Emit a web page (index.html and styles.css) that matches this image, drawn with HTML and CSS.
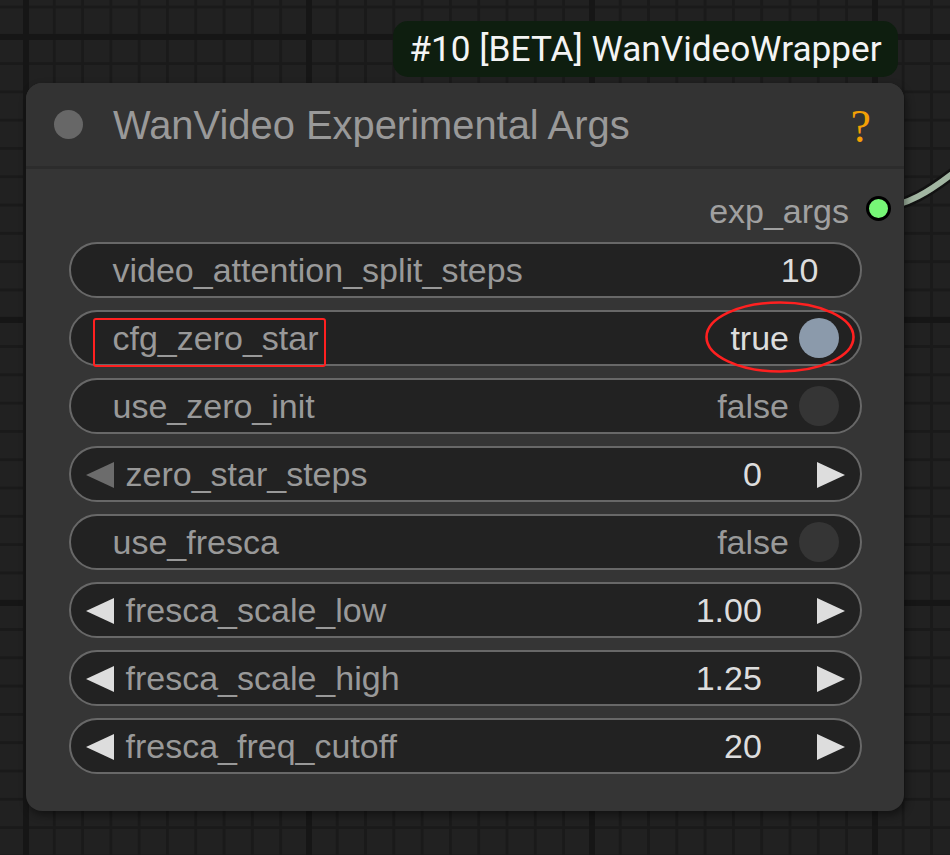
FILE: index.html
```html
<!DOCTYPE html>
<html>
<head>
<meta charset="utf-8">
<link rel="stylesheet" href="styles.css">
</head>
<body>
<div class="canvas">
  <svg class="wire" width="950" height="855" viewBox="0 0 950 855">
    <path class="wire-outline" d="M878 208 C905 207 930 192 962 166"/>
    <path class="wire-core" d="M878 208 C905 207 930 192 962 166"/>
  </svg>

  <div class="badge">#10 [BETA] WanVideoWrapper</div>

  <div class="node">
    <div class="title">
      <span class="collapse-dot"></span>
      <span class="title-text">WanVideo Experimental Args</span>
      <span class="help">?</span>
    </div>
    <div class="outputs">
      <div class="slot">
        <span class="slot-label">exp_args</span>
        <span class="slot-dot"></span>
      </div>
    </div>
    <div class="widgets">
      <div class="widget plain">
        <span class="label">video_attention_split_steps</span>
        <span class="value">10</span>
      </div>
      <div class="widget toggle">
        <span class="label">cfg_zero_star</span>
        <span class="value">true</span>
        <span class="knob on"></span>
      </div>
      <div class="widget toggle">
        <span class="label">use_zero_init</span>
        <span class="value off">false</span>
        <span class="knob"></span>
      </div>
      <div class="widget number">
        <span class="arrow left dim"></span>
        <span class="label">zero_star_steps</span>
        <span class="value">0</span>
        <span class="arrow right"></span>
      </div>
      <div class="widget toggle">
        <span class="label">use_fresca</span>
        <span class="value off">false</span>
        <span class="knob"></span>
      </div>
      <div class="widget number">
        <span class="arrow left"></span>
        <span class="label">fresca_scale_low</span>
        <span class="value">1.00</span>
        <span class="arrow right"></span>
      </div>
      <div class="widget number">
        <span class="arrow left"></span>
        <span class="label">fresca_scale_high</span>
        <span class="value">1.25</span>
        <span class="arrow right"></span>
      </div>
      <div class="widget number">
        <span class="arrow left"></span>
        <span class="label">fresca_freq_cutoff</span>
        <span class="value">20</span>
        <span class="arrow right"></span>
      </div>
    </div>
  </div>

  <div class="mark-box"></div>
  <svg class="mark-ellipse" width="152" height="74" viewBox="0 0 152 74">
    <ellipse cx="76" cy="37" rx="73.5" ry="34.5"/>
  </svg>
</div>
</body>
</html>
```

FILE: styles.css
```css
html, body {
  margin: 0;
  padding: 0;
}

body {
  width: 950px;
  height: 855px;
  overflow: hidden;
  background-color: #212121;
  background-image:
    linear-gradient(90deg, #161616 6px, transparent 6px),
    linear-gradient(180deg, #161616 6px, transparent 6px),
    linear-gradient(90deg, #1a1a1a 3px, transparent 3px),
    linear-gradient(180deg, #1a1a1a 3px, transparent 3px);
  background-size: 283px 283px, 283px 283px, 28.3px 28.3px, 28.3px 28.3px;
  background-position: 23px 0, 0 34px, 24.5px 0, 0 5.5px;
  font-family: "Liberation Sans", Arial, sans-serif;
}

.canvas {
  position: relative;
  width: 950px;
  height: 855px;
}

/* link wire */
.wire {
  position: absolute;
  left: 0;
  top: 0;
}

.wire path {
  fill: none;
  stroke-linecap: round;
}

.wire-outline {
  stroke: #121212;
  stroke-width: 11;
}

.wire-core {
  stroke: #a2b6a2;
  stroke-width: 6;
}

/* badge */
.badge {
  position: absolute;
  left: 393px;
  top: 21px;
  width: 505px;
  height: 56px;
  box-sizing: border-box;
  border-radius: 15px;
  background: #0e1e0f;
  color: #f4f4f4;
  font-family: Roboto, "Noto Sans", sans-serif;
  font-size: 35.2px;
  line-height: 1;
  display: flex;
  align-items: center;
  justify-content: center;
  white-space: nowrap;
  padding-top: 1px;
}

/* node */
.node {
  position: absolute;
  left: 26px;
  top: 83px;
  width: 878px;
  height: 728px;
  box-sizing: border-box;
  background: #353535;
  border-radius: 16px;
  box-shadow: 2px 4px 8px rgba(0, 0, 0, 0.45);
  display: flex;
  flex-direction: column;
}

.title {
  height: 86px;
  flex: none;
  box-sizing: border-box;
  border-bottom: 3px solid #2c2c2c;
  background: #333333;
  border-radius: 16px 16px 0 0;
  display: flex;
  align-items: center;
  padding: 0 35px 0 27.5px;
}

.collapse-dot {
  width: 29px;
  height: 29px;
  border-radius: 50%;
  background: #676767;
  flex: none;
}

.title-text {
  margin-left: 30.5px;
  font-size: 39.9px;
  line-height: 1;
  color: #999999;
  white-space: nowrap;
  padding-top: 2px;
}

.help {
  margin-left: auto;
  font-family: "Liberation Serif", "Times New Roman", serif;
  font-size: 46px;
  line-height: 1;
  color: #f4a005;
  padding-top: 4px;
  margin-right: -2px;
}

.outputs {
  height: 72.7px;
  flex: none;
  display: flex;
  flex-direction: column;
}

.slot {
  margin-top: 25px;
  height: 28px;
  display: flex;
  align-items: center;
  justify-content: flex-end;
  padding-right: 13.5px;
}

.slot-label {
  font-size: 34px;
  line-height: 1;
  color: #a0a0a0;
  padding-top: 5px;
  margin-right: 16.5px;
}

.slot-dot {
  width: 19px;
  height: 19px;
  border-radius: 50%;
  background: #77f777;
  border: 3px solid #000;
  flex: none;
}

.widgets {
  display: flex;
  flex-direction: column;
  gap: 11.3px;
  padding: 0 42.5px;
}

.widget {
  height: 56.7px;
  box-sizing: border-box;
  border: 2.5px solid #686868;
  border-radius: 28.35px;
  background: #222222;
  display: flex;
  align-items: center;
  font-size: 34px;
  line-height: 1;
  white-space: nowrap;
}

.label {
  color: #999999;
}

.value {
  margin-left: auto;
  color: #dddddd;
}

.value.off {
  color: #999999;
}

.plain {
  padding: 0 41px 0 42px;
}

.toggle {
  padding: 0 20.5px 0 42px;
}

.toggle .value {
  margin-right: 9.5px;
}

.knob {
  width: 40.5px;
  height: 40.5px;
  border-radius: 50%;
  background: #353535;
  flex: none;
}

.knob.on {
  background: #8b9aab;
}

.number {
  padding: 0 14.7px 0 15px;
}

.arrow {
  width: 0;
  height: 0;
  flex: none;
  border-top: 13.5px solid transparent;
  border-bottom: 13.5px solid transparent;
}

.arrow.left {
  border-right: 28.3px solid #dddddd;
  margin-right: 12px;
  margin-top: 2px;
}

.arrow.left.dim {
  border-right-color: #6c6c6c;
}

.arrow.right {
  border-left: 28.3px solid #dddddd;
  margin-left: 55px;
  margin-top: 2px;
}

/* annotations */
.mark-box {
  position: absolute;
  left: 92.5px;
  top: 317.5px;
  width: 233px;
  height: 49.5px;
  box-sizing: border-box;
  border: 2.5px solid #ff2020;
  border-radius: 3px;
}

.mark-ellipse {
  position: absolute;
  left: 704px;
  top: 300px;
}

.mark-ellipse ellipse {
  fill: none;
  stroke: #ff2020;
  stroke-width: 2.6;
}
```
